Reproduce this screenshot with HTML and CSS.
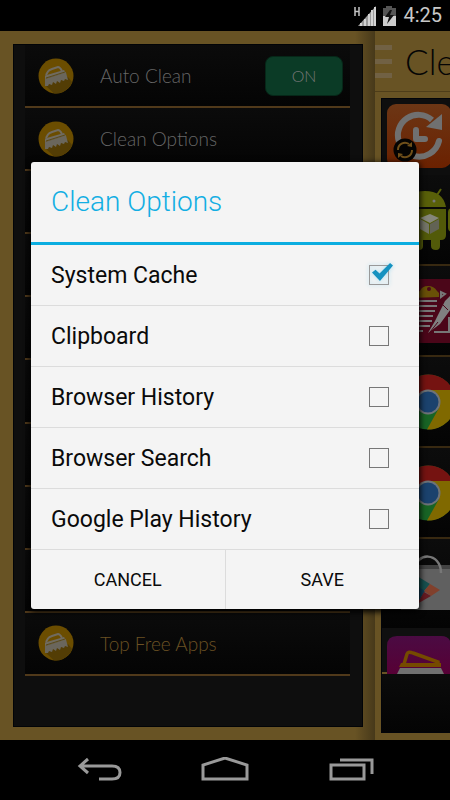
FILE: index.html
```html
<!DOCTYPE html>
<html lang="en">
<head>
    <meta charset="UTF-8">
    <meta name="viewport" content="width=device-width, initial-scale=1.0">
    <title>Clean Options</title>
    <link rel="stylesheet" href="styles.css">
</head>
<body>
    <svg class="sprite" aria-hidden="true">
        <symbol id="brush" viewBox="0 0 36 36">
            <circle cx="18" cy="18" r="17.5" fill="#6b4d00"/>
            <path d="M7 27L30 19L34 24A17.500 17.500 0 0 1 16 35.400Z" fill="#533d05"/>
            <path d="M8 17L10 13.500Q11 12 14 11L20 9Q22 9 24 13" fill="none" stroke="#706b60" stroke-width="2"/>
            <path d="M7 17.500L26 12L28 15L7 21Z" fill="#706b60"/>
            <path d="M7 21L28 14.500L30 22L27 21L26 23L23 22L22 25L19 23L18 26L15 24L14 27L11 26L10 28L7 28Z" fill="#6a665c"/>
            <path d="M8 20L27 14" stroke="#534005" stroke-width=".8"/>
        </symbol>
        <symbol id="chrome" viewBox="0 0 56 56">
            <circle cx="28" cy="28" r="27.500" fill="#186425"/>
            <path d="M4 15A27.500 27.500 0 0 1 53 16H28L17 33Z" fill="#751311"/>
            <path d="M28 16H53A27.500 27.500 0 0 1 27 55.500L39 34Z" fill="#806900"/>
            <circle cx="28" cy="28" r="12.500" fill="#6e7377"/>
            <circle cx="28" cy="28" r="10.500" fill="#1b426d"/>
        </symbol>
    </svg>

    <div class="phone">
        <header class="status-bar">
            <svg class="status-icons" viewBox="0 0 44 22" aria-hidden="true">
                <path d="M1 2V11M5 2V11M1 6.500H5" fill="none" stroke="#c4c4c4" stroke-width="1.500"/>
                <path d="M4 21L22 1V21Z" fill="#999"/>
                <path d="M7 18V21M11 14V21M15 9V21M18 5V21M21 2V21" stroke="#d2d2d2" stroke-width="2"/>
                <path d="M29 3H32V1H38V3H42V11H29Z" fill="#555"/>
                <path d="M29 11H42V21H29Z" fill="#ccc"/>
                <path d="M36 5L31 12H35L33 19L40 10H36L38 5Z" fill="#111"/>
            </svg>
            <span class="clock">4:25</span>
        </header>

        <main class="screen">
            <section class="drawer">
                <ul class="menu">
                    <li class="menu-item">
                        <svg class="menu-icon"><use href="#brush"/></svg>
                        <span>Auto Clean</span>
                        <button class="toggle" type="button">ON</button>
                    </li>
                    <li class="menu-item">
                        <svg class="menu-icon"><use href="#brush"/></svg>
                        <span>Clean Options</span>
                    </li>
                    <li class="menu-item"></li>
                    <li class="menu-item"></li>
                    <li class="menu-item"></li>
                    <li class="menu-item"></li>
                    <li class="menu-item"></li>
                    <li class="menu-item"></li>
                    <li class="menu-item"></li>
                    <li class="menu-item menu-item-gold">
                        <svg class="menu-icon"><use href="#brush"/></svg>
                        <span>Top Free Apps</span>
                    </li>
                </ul>
            </section>

            <section class="page">
                <div class="page-header">
                    <div class="hamburger"><i></i><i></i><i></i></div>
                    <h1>Clean</h1>
                </div>
                <div class="app-list">
                    <div class="app-row app-row-first">
                        <svg class="app-icon" viewBox="0 0 64 64">
                            <defs>
                                <linearGradient id="orange" x2="0" y2="1">
                                    <stop stop-color="#6c3615"/>
                                    <stop offset="1" stop-color="#6b2100"/>
                                </linearGradient>
                            </defs>
                            <rect width="64" height="64" rx="9" fill="url(#orange)"/>
                            <path d="M12 38A20.500 20.500 0 0 1 45 16" fill="none" stroke="#707070" stroke-width="6"/>
                            <path d="M39 23L55 10V26Z" fill="#707070"/>
                            <path d="M52 37A20.500 20.500 0 0 1 27 52" fill="none" stroke="#707070" stroke-width="6" stroke-linecap="round"/>
                            <path d="M29 26V35H38" fill="none" stroke="#707070" stroke-width="6" stroke-linecap="round" stroke-linejoin="round"/>
                            <circle cx="18" cy="46" r="11.500" fill="#050403"/>
                            <path d="M11 46A7 7 0 0 1 22 40M25 46A7 7 0 0 1 14 52" fill="none" stroke="#70501a" stroke-width="2"/>
                            <path d="M20 42L25 38V43ZM16 50L11 54V49Z" fill="#70501a"/>
                        </svg>
                    </div>
                    <div class="app-row">
                        <svg class="app-icon" viewBox="0 0 64 64">
                            <path d="M23 6L28 13M54 1L48 10" stroke="#586008" stroke-width="2"/>
                            <path d="M17 19Q19 3 38 3Q56 3 59 19Z" fill="#596009"/>
                            <circle cx="47" cy="13" r="1.500" fill="#777"/>
                            <circle cx="29" cy="13" r="1.500" fill="#777"/>
                            <path d="M18 21H59V47Q59 52 54 52H53V58Q53 62 49 62Q44 62 44 58V52H36V58Q36 62 32 62Q27 62 27 58V52H22Q18 52 18 48Z" fill="#525a09"/>
                            <path d="M61 24Q61 20 66 20V44Q61 44 61 40Z" fill="#59600a"/>
                            <path d="M33 30L43 26L52 30L43 35Z" fill="#85867a"/>
                            <path d="M33 31L42 36V46L33 41Z" fill="#747568"/>
                            <path d="M52 31L43 36V46L52 41Z" fill="#626354"/>
                        </svg>
                    </div>
                    <div class="app-row">
                        <svg class="app-icon" viewBox="0 0 64 64">
                            <rect width="64" height="64" fill="#4b0619"/>
                            <path d="M24 19V15L33 12Q35 7 41 7Q47 7 50 12L52 14V18Z" fill="#695007"/>
                            <circle cx="42" cy="10" r="2" fill="#4b0619"/>
                            <path d="M24 22H50M24 27H50M24 32H48M24 37H46M24 42H45M24 47H43M24 52H36" stroke="#777" stroke-width="2"/>
                            <path d="M54 13V18L58 15ZM47 53H62V38" fill="none" stroke="#777" stroke-width="2"/>
                            <path d="M66 14L58 22L48 42L41 54L53 45L66 27Z" fill="#808080"/>
                            <path d="M56 26L61 31M43 53L51 43" stroke="#4b0619" stroke-width="1"/>
                        </svg>
                    </div>
                    <div class="app-row app-row-chrome"><svg class="chrome-icon"><use href="#chrome"/></svg></div>
                    <div class="app-row app-row-chrome"><svg class="chrome-icon"><use href="#chrome"/></svg></div>
                    <div class="app-row app-row-store">
                        <svg class="app-icon" viewBox="0 0 64 64">
                            <path d="M8 10H64V55H14Z" fill="#606060"/>
                            <path d="M8 10H64V14H8Z" fill="#424242"/>
                            <path d="M28 16C28 -4 54 -3 54 18" fill="none" stroke="#777" stroke-width="2.500"/>
                            <path d="M30 21L43 29L37 36L30 34Z" fill="#17504f"/>
                            <path d="M30 31L38 36L30 49Z" fill="#103f58"/>
                            <path d="M43 29L53 35L44 41L37 36Z" fill="#81402c"/>
                            <path d="M30 49L37 37L44 41Z" fill="#661b22"/>
                        </svg>
                    </div>
                    <div class="app-row app-row-last">
                        <svg class="app-icon" viewBox="0 0 64 38">
                            <defs>
                                <linearGradient id="purple" x2="0" y2="1">
                                    <stop stop-color="#4b0b43"/>
                                    <stop offset="1" stop-color="#570035"/>
                                </linearGradient>
                            </defs>
                            <path d="M0 38V10Q0 0 10 0H54Q64 0 64 10V38Z" fill="url(#purple)"/>
                            <path d="M17 28L20 18Q21 15 26 17L51 26V28" fill="none" stroke="#754a00" stroke-width="3.500"/>
                            <path d="M14 27H54V31H12Z" fill="#754a00"/>
                            <path d="M13 32H54L57 38H10Z" fill="#707070"/>
                        </svg>
                    </div>
                    <div class="app-footer"></div>
                </div>
            </section>

            <form class="dialog" role="dialog" aria-labelledby="dialogTitle">
                <h2 class="dialog-title" id="dialogTitle">Clean Options</h2>
                <label class="option">System Cache <input type="checkbox" checked></label>
                <label class="option">Clipboard <input type="checkbox"></label>
                <label class="option">Browser History <input type="checkbox"></label>
                <label class="option">Browser Search <input type="checkbox"></label>
                <label class="option">Google Play History <input type="checkbox"></label>
                <div class="dialog-buttons">
                    <button type="button">CANCEL</button>
                    <button type="button">SAVE</button>
                </div>
            </form>
        </main>

        <nav class="nav-bar">
            <button type="button" aria-label="Back">
                <svg viewBox="0 0 48 26"><path d="M13 2L5 9L13 16M6 9H37Q45 9 45 15.500Q45 22 37 22H24"/></svg>
            </button>
            <button type="button" aria-label="Home">
                <svg viewBox="0 0 48 26"><path d="M2 22V8L24 1L46 8V22Z"/></svg>
            </button>
            <button type="button" aria-label="Recent apps">
                <svg viewBox="0 0 48 26"><path d="M4 8H37V22H4ZM13 3H45V17"/></svg>
            </button>
        </nav>
    </div>
</body>
</html>
```

FILE: styles.css
```css
* {
    box-sizing: border-box;
}

body {
    margin: 0;
    background-color: #000;
    font-family: Roboto, "Liberation Sans", sans-serif;
}

button {
    border: none;
    padding: 0;
    background: none;
    font-family: inherit;
    cursor: pointer;
}

.sprite {
    position: absolute;
    width: 0;
    height: 0;
}

.phone {
    display: flex;
    flex-direction: column;
    height: 100vh;
    overflow: hidden;
}

.status-bar {
    display: flex;
    align-items: center;
    justify-content: flex-end;
    gap: 5px;
    height: 31px;
    padding-right: 8px;
    color: #c8c8c8;
}

.status-icons {
    width: 44px;
    height: 22px;
}

.clock {
    font-size: 20px;
    line-height: 31px;
}

.screen {
    position: relative;
    display: flex;
    flex: 1;
    min-height: 0;
    background-color: #685324;
}

/* drawer */
.drawer {
    flex: 1;
    display: flex;
    padding: 13px 12px 13px 13px;
    background: linear-gradient(to left, #47391a, #685324 20px);
}

.menu {
    flex: 1;
    display: flex;
    flex-direction: column;
    margin: 0;
    padding: 0 12px 50px 11px;
    list-style: none;
    background-color: #0e0e0e;
    border: 1px solid #020407;
}

.menu-item {
    flex: 1;
    display: flex;
    align-items: center;
    gap: 26px;
    padding: 0 7px 0 13px;
    background: linear-gradient(#0b0b0b, #040404);
    border-bottom: 2px solid #50391a;
    color: #666;
    font-family: Lato, sans-serif;
    font-weight: 300;
    font-size: 19px;
}

.menu-item-gold {
    color: #6b5123;
}

.menu-icon {
    width: 36px;
    height: 36px;
}

.toggle {
    width: 78px;
    height: 40px;
    margin-left: auto;
    background-color: #0b3b26;
    border: 1px solid #062718;
    border-radius: 8px;
    color: #777;
    font-family: Lato, sans-serif;
    font-weight: 300;
    font-size: 16px;
}

/* page pushed aside by the drawer */
.page {
    display: flex;
    flex-direction: column;
    width: 75px;
    overflow: hidden;
}

.page-header {
    display: flex;
    align-items: center;
    gap: 13px;
    height: 61px;
    border-bottom: 1px solid #4e3d19;
}

.page-header h1 {
    margin: 0;
    color: #050505;
    font-family: Lato, sans-serif;
    font-weight: 300;
    font-size: 35px;
}

.hamburger {
    display: flex;
    flex-direction: column;
    gap: 9px;
    flex: none;
}

.hamburger i {
    width: 17px;
    height: 5px;
    background-color: #716144;
}

.app-list {
    flex: 1;
    display: flex;
    flex-direction: column;
    margin: 6px 0 7px 6px;
    border: 1px solid #02040a;
    border-right: none;
    background-color: #0c0c0c;
}

.app-row {
    flex: none;
    height: 91px;
    padding: 13px 0 0 5px;
    background: linear-gradient(#0c0c0c, #040404);
    border-bottom: 2px solid #382911;
}

.app-row-first {
    height: 76px;
    padding-top: 5px;
    background: #0e0e0e;
    border-bottom: none;
}

.app-row-chrome {
    padding: 17px 0 0 18px;
}

.app-row-store {
    height: 89px;
    padding-top: 16px;
    border-bottom: none;
}

.app-row-last {
    height: 46px;
    padding-top: 8px;
    background: #101010;
    border-bottom: 2px solid #685324;
}

.app-icon {
    display: block;
    width: 64px;
    height: 64px;
}

.app-row-last .app-icon {
    height: 38px;
}

.chrome-icon {
    display: block;
    width: 56px;
    height: 56px;
}

.app-footer {
    flex: 1;
    background: linear-gradient(#0b0b0b, #040404);
}

/* dialog */
.dialog {
    position: absolute;
    top: 0;
    bottom: 0;
    left: 31px;
    right: 31px;
    height: fit-content;
    margin: auto 0;
    background-color: #f4f4f4;
    border-radius: 3px;
    box-shadow: 0 2px 6px 1px #000;
    color: #0a0a0a;
}

.dialog-title {
    margin: 0;
    padding-left: 20px;
    border-bottom: 3px solid #0bade0;
    color: #12aee3;
    font-size: 28px;
    font-weight: 300;
    line-height: 80px;
}

.option {
    display: flex;
    align-items: center;
    justify-content: space-between;
    height: 61px;
    padding: 0 30px 0 20px;
    border-bottom: 1px solid #dcdcdc;
    font-size: 23px;
}

.option input {
    position: relative;
    appearance: none;
    width: 20px;
    height: 20px;
    margin: 0;
    border: 1px solid #777;
}

.option input:checked::after {
    content: "";
    position: absolute;
    top: -3px;
    left: 2px;
    width: 21px;
    height: 18px;
    background-color: #1592c0;
    clip-path: polygon(0 53%, 17% 38%, 36% 59%, 86% 0, 100% 14%, 38% 100%);
}

.option input:checked {
    border-color: #999;
    filter: drop-shadow(0 0 2px #a6dcf0);
}

.dialog-buttons {
    display: flex;
    height: 59px;
}

.dialog-buttons button {
    flex: 1;
    color: #0a0a0a;
    font-size: 18px;
}

.dialog-buttons button + button {
    border-left: 1px solid #dcdcdc;
}

/* system navigation */
.nav-bar {
    display: flex;
    align-items: center;
    justify-content: center;
    gap: 78px;
    height: 60px;
}

.nav-bar button {
    width: 48px;
    height: 26px;
}

.nav-bar svg {
    display: block;
    fill: none;
    stroke: #999;
    stroke-width: 3;
}
```
